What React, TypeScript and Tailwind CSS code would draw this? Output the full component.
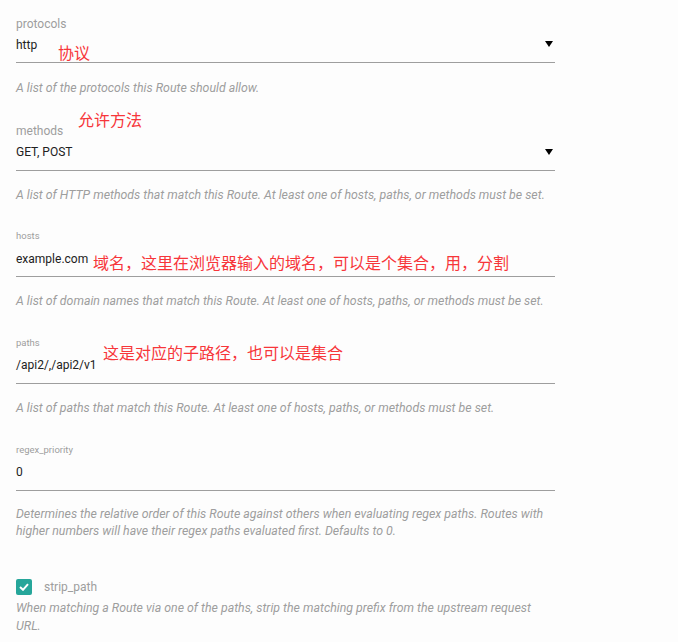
const roboto = { fontFamily: "Roboto, 'Noto Sans', sans-serif" };

function Caret({ top }: { top: string }) {
  return (
    <svg width="8" height="6" viewBox="0 0 8 6" className={`mr-[2px] shrink-0 ${top}`}>
      <path d="M0 0 L8 0 L4 6 Z" fill="#000" />
    </svg>
  );
}

function Note({ text, className }: { text: string; className: string }) {
  return (
    <span
      className={`absolute whitespace-nowrap text-[16px] leading-[17px] text-[#f7363a] ${className}`}
      style={{ fontFamily: "'Microsoft YaHei', 'Noto Sans CJK SC', sans-serif" }}
    >
      {text}
    </span>
  );
}

export default function App() {
  return (
    <div className="min-h-[642px] bg-[#fdfdfd] pl-4 pt-4 text-[12px]" style={roboto}>
      <div className="w-[539px]">
        {/* protocols */}
        <div className="relative">
          <label className="block text-[12px] leading-4 text-[#9e9e9e]">protocols</label>
          <div className="flex h-[31px] justify-between border-b border-[#9e9e9e]">
            <span className="pt-[5px] leading-4 text-[#212121]">http</span>
            <Caret top="mt-[9px]" />
          </div>
          <Note text="协议" className="left-[42px] top-[28px]" />
          <p className="mt-[17px] text-[12.35px] italic leading-4 text-[#9e9e9e]">
            A list of the protocols this Route should allow.
          </p>
        </div>

        {/* methods */}
        <div className="relative mt-[27px]">
          <label className="block leading-4 text-[#9e9e9e]">methods</label>
          <div className="flex h-[32px] justify-between border-b border-[#9e9e9e]">
            <span className="pt-[5px] leading-4 text-[#212121]">GET, POST</span>
            <Caret top="mt-[10px]" />
          </div>
          <Note text="允许方法" className="left-[62px] top-[-12px]" />
          <p className="mt-[16px] text-[12.35px] italic leading-4 text-[#9e9e9e]">
            A list of HTTP methods that match this Route. At least one of hosts, paths, or methods must be set.
          </p>
        </div>

        {/* hosts */}
        <div className="relative mt-[27px]">
          <label className="block text-[9.5px] leading-3 text-[#9e9e9e]">hosts</label>
          <div className="h-[35px] border-b border-[#9e9e9e]">
            <span className="block pt-[9px] leading-4 text-[#212121]">example.com</span>
          </div>
          <Note text="域名，这里在浏览器输入的域名，可以是个集合，用，分割" className="left-[77px] top-[24px]" />
          <p className="mt-[16px] text-[12.35px] italic leading-4 text-[#9e9e9e]">
            A list of domain names that match this Route. At least one of hosts, paths, or methods must be set.
          </p>
        </div>

        {/* paths */}
        <div className="relative mt-[28px]">
          <label className="block text-[9.5px] leading-3 text-[#9e9e9e]">paths</label>
          <div className="h-[35px] border-b border-[#9e9e9e]">
            <span className="block pt-[8px] leading-4 text-[#212121]">/api2/,/api2/v1</span>
          </div>
          <Note text="这是对应的子路径，也可以是集合" className="left-[87px] top-[7px]" />
          <p className="mt-[16px] text-[12.35px] italic leading-4 text-[#9e9e9e]">
            A list of paths that match this Route. At least one of hosts, paths, or methods must be set.
          </p>
        </div>

        {/* regex_priority */}
        <div className="mt-[28px]">
          <label className="block text-[9.5px] leading-3 text-[#9e9e9e]">regex_priority</label>
          <div className="h-[35px] border-b border-[#9e9e9e]">
            <span className="block pt-[8px] leading-4 text-[#212121]">0</span>
          </div>
          <p className="mt-[15px] text-[12.35px] italic leading-[17px] text-[#9e9e9e]">
            Determines the relative order of this Route against others when evaluating regex paths. Routes with
            higher numbers will have their regex paths evaluated first. Defaults to 0.
          </p>
        </div>

        {/* strip_path */}
        <div className="mt-[39px]">
          <div className="flex items-center">
            <span className="flex h-4 w-4 items-center justify-center rounded-[2px] bg-[#26a69a]">
              <svg width="10" height="8" viewBox="0 0 10 8">
                <path d="M1 4 L4 6.8 L9 1.2" fill="none" stroke="#fff" strokeWidth="2" />
              </svg>
            </span>
            <span className="ml-[12px] leading-4 text-[#9e9e9e]">strip_path</span>
          </div>
          <p className="mt-[4px] text-[12.35px] italic leading-[18px] text-[#9e9e9e]">
            When matching a Route via one of the paths, strip the matching prefix from the upstream request URL.
          </p>
        </div>
      </div>
    </div>
  );
}
